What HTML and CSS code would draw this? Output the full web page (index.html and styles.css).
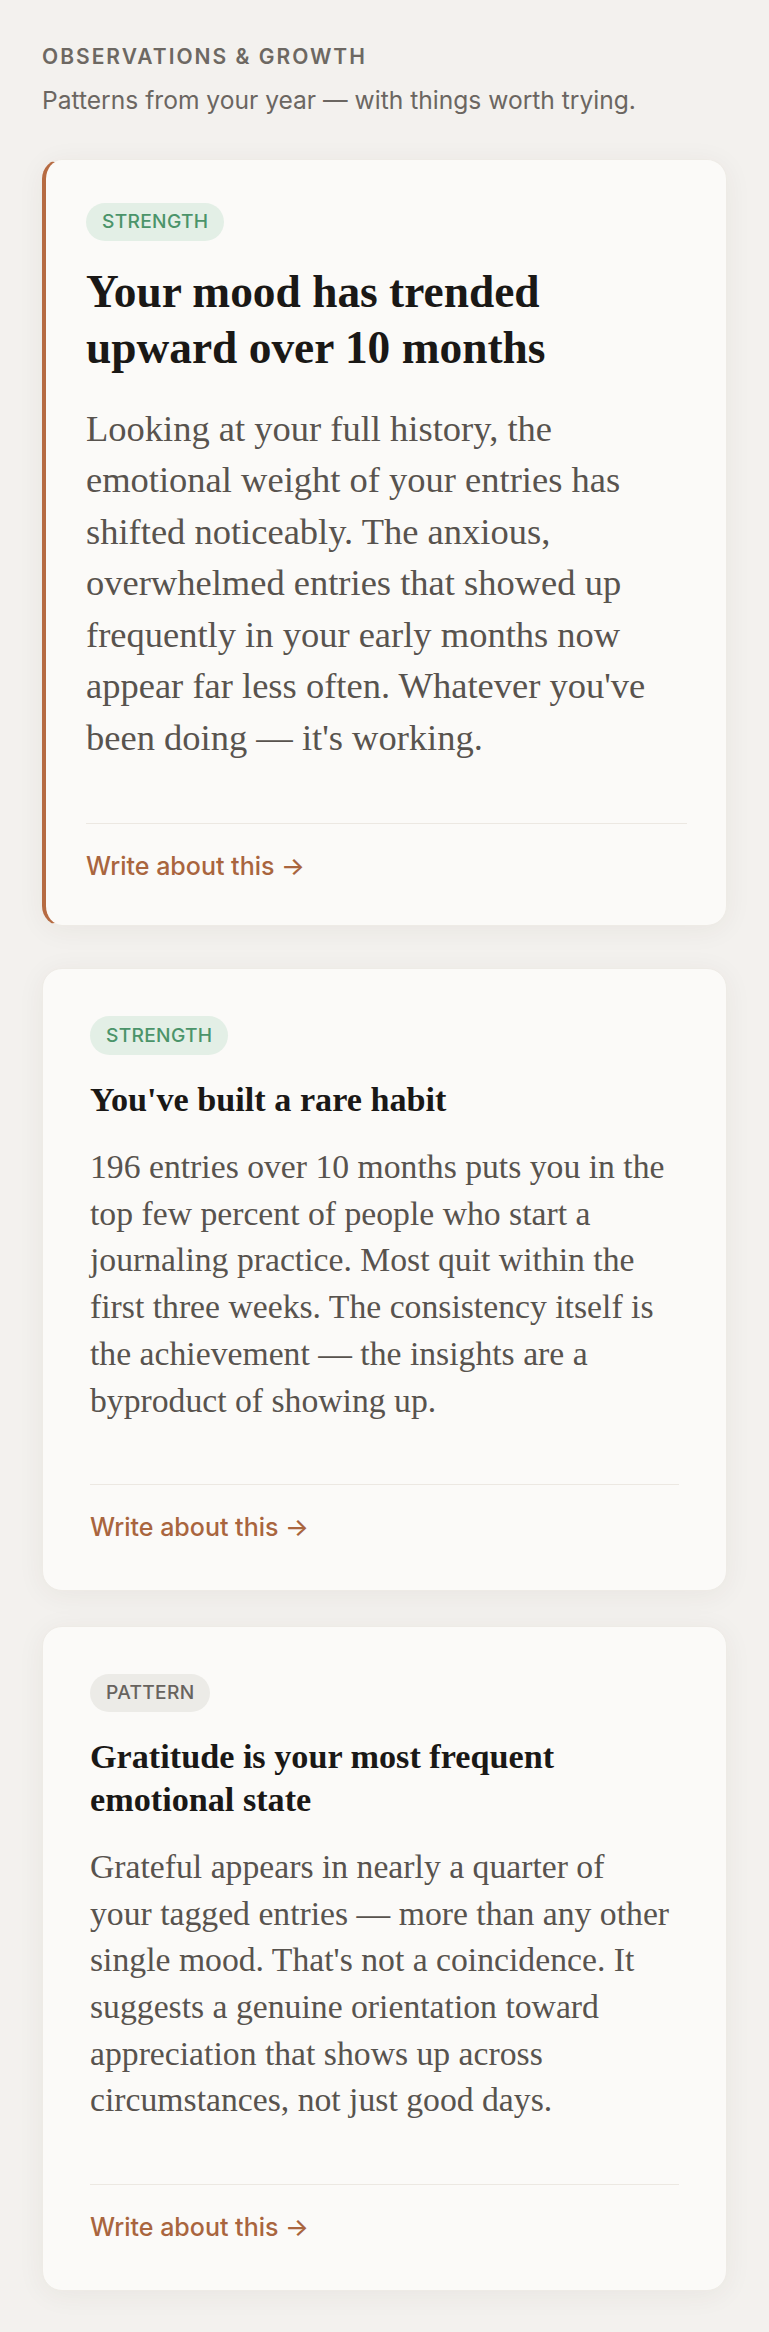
FILE: index.html
```html
<!DOCTYPE html>
<html lang="en">
<head>
<meta charset="utf-8">
<title>Observations &amp; Growth</title>
<link rel="stylesheet" href="styles.css">
</head>
<body>
<main class="page">
  <header class="intro">
    <h2 class="eyebrow">OBSERVATIONS &amp; GROWTH</h2>
    <p class="lede">Patterns from your year — with things worth trying.</p>
  </header>

  <section class="cards">
    <article class="card card--featured">
      <span class="tag tag--strength">STRENGTH</span>
      <h3 class="title">Your mood has trended upward over 10 months</h3>
      <p class="text">Looking at your full history, the emotional weight of your entries has shifted noticeably. The anxious, overwhelmed entries that showed up frequently in your early months now appear far less often. Whatever you've been doing — it's working.</p>
      <div class="footer"><a class="link" href="#">Write about this →</a></div>
    </article>

    <article class="card">
      <span class="tag tag--strength">STRENGTH</span>
      <h3 class="title">You've built a rare habit</h3>
      <p class="text">196 entries over 10 months puts you in the top few percent of people who start a journaling practice. Most quit within the first three weeks. The consistency itself is the achievement — the insights are a byproduct of showing up.</p>
      <div class="footer"><a class="link" href="#">Write about this →</a></div>
    </article>

    <article class="card">
      <span class="tag tag--pattern">PATTERN</span>
      <h3 class="title">Gratitude is your most frequent emotional state</h3>
      <p class="text">Grateful appears in nearly a quarter of your tagged entries — more than any other single mood. That's not a coincidence. It suggests a genuine orientation toward appreciation that shows up across circumstances, not just good days.</p>
      <div class="footer"><a class="link" href="#">Write about this →</a></div>
    </article>
  </section>
</main>
</body>
</html>
```

FILE: styles.css
```css
html {
  background: #f3f1ee;
}

body {
  margin: 0;
  background: #f3f1ee;
}

.page {
  padding: 44px 42px 43px;
}

.eyebrow {
  margin: 0;
  font-family: Inter, "Noto Sans", sans-serif;
  font-weight: 600;
  font-size: 21px;
  line-height: 26px;
  letter-spacing: 2px;
  color: #6d6862;
}

.lede {
  margin: 15px 0 0;
  font-family: Inter, "Noto Sans", sans-serif;
  font-weight: 400;
  font-size: 24.6px;
  line-height: 31px;
  color: #6b6661;
}

.cards {
  margin-top: 42.6px;
  display: flex;
  flex-direction: column;
  gap: 35px;
}

.card {
  display: flex;
  flex-direction: column;
  align-items: flex-start;
  background: #fbfaf8;
  border: 1px solid #eeebe6;
  border-radius: 20px;
  padding: 47px 47px 48px;
  box-shadow: 0 4px 28px rgba(70, 55, 40, 0.06);
}

.card--featured {
  border-left: 4.5px solid #b66b42;
  padding: 43.4px 39px 44px 40px;
  margin-bottom: 7px;
}

.tag {
  font-family: Inter, "Noto Sans", sans-serif;
  font-weight: 500;
  font-size: 19.2px;
  line-height: 23.5px;
  letter-spacing: 0.3px;
  padding: 7.5px 16px;
  border-radius: 999px;
}

.tag--strength {
  background: #e3efe6;
  color: #4b946a;
}

.tag--pattern {
  background: #ecebe7;
  color: #67635e;
}

.title {
  margin: 24px 0 0;
  font-family: "Liberation Serif", "Times New Roman", serif;
  font-weight: 700;
  font-size: 34.2px;
  line-height: 42.3px;
  color: #1a1816;
}

.card--featured .title {
  margin-top: 22.3px;
  font-size: 45.4px;
  line-height: 56px;
}

.text {
  margin: 23px 0 0;
  max-width: 580px;
  font-family: "Liberation Serif", "Times New Roman", serif;
  font-weight: 400;
  font-size: 33.7px;
  line-height: 46.7px;
  color: #58534e;
}

.card--featured .text {
  margin-top: 27px;
  max-width: none;
  font-size: 36.5px;
  line-height: 51.5px;
}

.footer {
  align-self: stretch;
  margin-top: 59.5px;
  border-top: 1.5px solid #ece8e2;
  padding-top: 27px;
}

.card--featured .footer {
  margin-top: 60px;
}

.link {
  font-family: Inter, "Noto Sans", sans-serif;
  font-weight: 500;
  font-size: 25px;
  line-height: 30px;
  color: #a9653e;
  text-decoration: none;
}
```
